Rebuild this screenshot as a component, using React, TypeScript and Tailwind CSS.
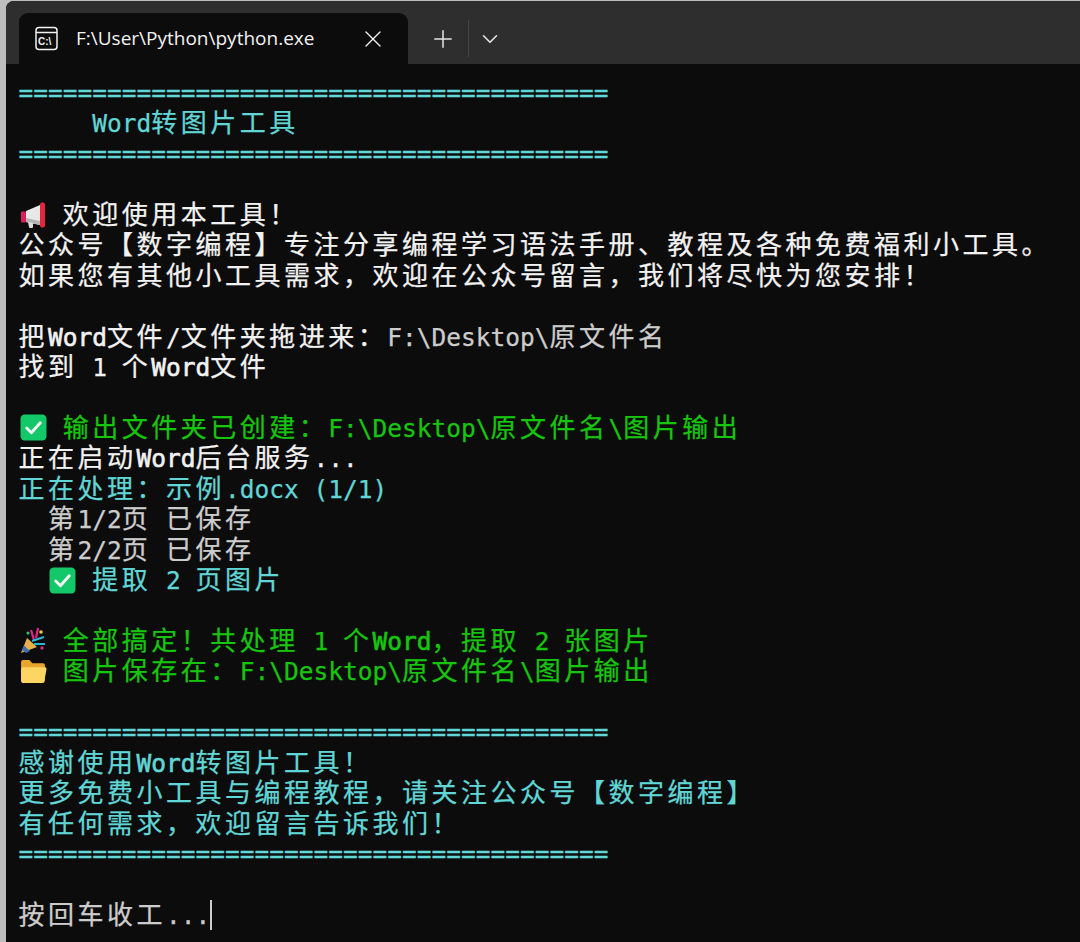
import React from "react";
import { Plus, X, ChevronDown } from "lucide-react";

const W = "text-[#f2f2f2]";
const G = "text-[#cccccc]";
const C = "text-[#61d6d6]";
const N = "text-[#16c60c]";

function Txt({ t }: { t: string }) {
  const parts = t.match(/[\u2E80-\u9FFF\u3000-\u303F\uFF00-\uFFEF]+|[^\u2E80-\u9FFF\u3000-\u303F\uFF00-\uFFEF]+/g) || [];
  return (
    <>
      {parts.map((p, i) =>
        /^[\u2E80-\u9FFF\u3000-\u303F\uFF00-\uFFEF]/.test(p) ? (
          <span key={i} className="relative top-[1px] text-[26px] leading-[0] tracking-[3.5px] font-['Noto_Sans_CJK_SC','Noto_Sans_CJK_JP',sans-serif]">
            {p}
          </span>
        ) : p === "Word" ? (
          <span key={i} className="relative top-[1px] [-webkit-text-stroke:0.6px]">{p}</span>
        ) : (
          <span key={i} className="relative top-[1px]">{p}</span>
        )
      )}
    </>
  );
}

function Row({ children, c = W }: { children?: React.ReactNode; c?: string }) {
  return <div className={`h-[30.45px] leading-[30.45px] whitespace-pre overflow-visible ${c}`}>{children}</div>;
}

function Emo({ children }: { children: React.ReactNode }) {
  return <span className="inline-flex w-[29.5px] h-[30px] items-center justify-center align-top">{children}</span>;
}

const Check = () => (
  <svg width="27" height="27" viewBox="0 0 26 26" className="shrink-0">
    <rect x="0.5" y="0.5" width="25" height="25" rx="4" fill="#12c868" />
    <path d="M6.5 13.5 L11 18 L19.5 8.5" fill="none" stroke="#f4f4f4" strokeWidth="2.8" strokeLinecap="round" strokeLinejoin="round" />
  </svg>
);

const Megaphone = () => (
  <svg width="26" height="26" viewBox="0 0 26 26" className="shrink-0">
    <rect x="1" y="9.5" width="5" height="11" rx="1" fill="#d81e5b" />
    <path d="M6 9 L20 3 V23 L6 20 Z" fill="#e8e8e8" />
    <path d="M6 16 L20 19 V23 L6 20 Z" fill="#b4b4b4" />
    <rect x="20" y="0.5" width="5" height="25" rx="2" fill="#e3263f" />
    <path d="M8 20 L13 21 L13 25 Q13 26 12 26 H10 Q9 26 9 25 Z" fill="#dcdcdc" />
  </svg>
);

const Party = () => (
  <svg width="26" height="28" viewBox="0 0 26 28" className="shrink-0">
    <path d="M1 26 L7 11 L17 20 Z" fill="#e8b04a" />
    <path d="M4 18.5 L10 24 L6 26 L2 23 Z" fill="#3f6fb0" />
    <path d="M11 3 L14 13 M18 1 L16 11" stroke="#e0268a" strokeWidth="2.2" fill="none" />
    <path d="M12 14 L24 10 M14 17 L25 17" stroke="#25b7d3" strokeWidth="2.2" fill="none" />
    <circle cx="21" cy="5" r="1.8" fill="#f4c542" />
    <circle cx="8" cy="6" r="1.6" fill="#35c46a" />
    <circle cx="22" cy="21" r="1.7" fill="#e0268a" />
  </svg>
);

const Folder = () => (
  <svg width="27" height="25" viewBox="0 0 26 24" className="shrink-0">
    <path d="M1 3 Q1 1 3 1 H9 L12 4 H22 Q24 4 24 6 V20 Q24 23 22 23 H3 Q1 23 1 20 Z" fill="#e8a62c" />
    <path d="M3 8 H24 Q26 8 25.5 10 L23.5 21 Q23 23 21 23 H3 Q1 23 1 20 V10 Q1 8 3 8 Z" fill="#fdd563" />
  </svg>
);

const EQ = "========================================";

export default function App() {
  return (
    <div className="w-[1080px] h-[942px] overflow-hidden bg-[#bdbdbd] pl-[6px] pt-[1px] flex">
      <div className="flex-1 flex flex-col rounded-tl-[8px] overflow-hidden bg-[#0c0c0c]">
        <div className="h-[63px] shrink-0 bg-[#2e2e2e] flex items-end pl-[13px]">
          <div className="w-[389px] h-[51px] bg-[#0c0c0c] rounded-t-[9px] flex items-center pl-[16px] pr-[21px] text-[#f2f2f2]">
            <svg width="23" height="25" viewBox="0 0 23 25" className="shrink-0">
              <rect x="1" y="1.5" width="21" height="22" rx="3" fill="none" stroke="#f2f2f2" strokeWidth="1.5" />
              <path d="M1 6.5 H22" stroke="#f2f2f2" strokeWidth="1.5" />
              <text x="3" y="18.5" fontSize="10" fontWeight="700" fill="#f2f2f2" fontFamily="'Liberation Sans',sans-serif">C:\</text>
            </svg>
            <span className="ml-[18px] flex-1 text-[19px] font-['Open_Sans',sans-serif]">F:\User\Python\python.exe</span>
            <X size={28} strokeWidth={1.15} />
          </div>
          <div className="h-[51px] flex items-center text-[#e4e4e4]">
            <Plus size={28} strokeWidth={1.3} className="ml-[21px]" />
            <div className="w-[1px] h-[37px] bg-[#454545] ml-[11px]" />
            <ChevronDown size={26} strokeWidth={1.5} className="ml-[8px]" />
          </div>
        </div>
        <div className="flex-1 pl-[12.5px] pt-[14px] text-[24.5px] font-['DejaVu_Sans_Mono','Noto_Sans_CJK_SC',monospace] bg-[#0c0c0c] [-webkit-text-stroke:0.25px]">
          <Row c={C}>{EQ}</Row>
          <Row c={C}><Txt t="     Word转图片工具" /></Row>
          <Row c={C}>{EQ}</Row>
          <Row />
          <Row><Emo><Megaphone /></Emo> <Txt t={"欢迎使用本工具\uFF01"} /></Row>
          <Row><Txt t="公众号【数字编程】专注分享编程学习语法手册、教程及各种免费福利小工具。" /></Row>
          <Row><Txt t={"如果您有其他小工具需求\uFF0C欢迎在公众号留言\uFF0C我们将尽快为您安排\uFF01"} /></Row>
          <Row />
          <Row><Txt t={"把Word文件/文件夹拖进来\uFF1A"} /><span className={G}><Txt t="F:\Desktop\原文件名" /></span></Row>
          <Row><Txt t="找到 1 个Word文件" /></Row>
          <Row />
          <Row c={N}><Emo><Check /></Emo> <Txt t={"输出文件夹已创建\uFF1AF:\\Desktop\\原文件名\\图片输出"} /></Row>
          <Row><Txt t="正在启动Word后台服务..." /></Row>
          <Row c={C}><Txt t={"正在处理\uFF1A示例.docx (1/1)"} /></Row>
          <Row c={G}><Txt t="  第1/2页 已保存" /></Row>
          <Row c={G}><Txt t="  第2/2页 已保存" /></Row>
          <Row c={C}>{"  "}<Emo><Check /></Emo> <Txt t="提取 2 页图片" /></Row>
          <Row />
          <Row c={N}><Emo><Party /></Emo> <Txt t={"全部搞定\uFF01共处理 1 个Word\uFF0C提取 2 张图片"} /></Row>
          <Row c={N}><Emo><Folder /></Emo> <Txt t={"图片保存在\uFF1AF:\\Desktop\\原文件名\\图片输出"} /></Row>
          <Row />
          <Row c={C}>{EQ}</Row>
          <Row c={C}><Txt t={"感谢使用Word转图片工具\uFF01"} /></Row>
          <Row c={C}><Txt t={"更多免费小工具与编程教程\uFF0C请关注公众号【数字编程】"} /></Row>
          <Row c={C}><Txt t={"有任何需求\uFF0C欢迎留言告诉我们\uFF01"} /></Row>
          <Row c={C}>{EQ}</Row>
          <Row />
          <Row c={G}><Txt t="按回车收工..." /><span className="inline-block w-[1.5px] h-[30px] bg-[#cccccc] align-top" /></Row>
        </div>
      </div>
    </div>
  );
}
